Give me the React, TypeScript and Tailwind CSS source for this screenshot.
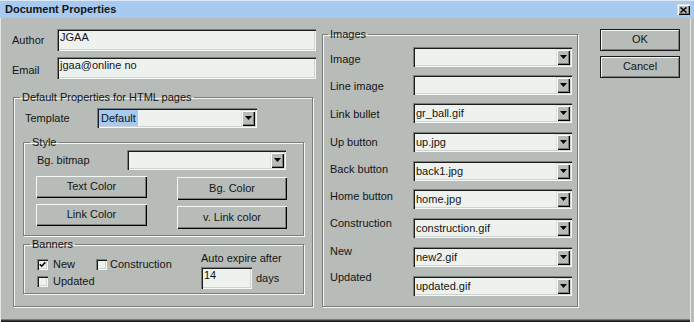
import React from "react";

const SUNKEN =
  "shadow-[inset_1px_1px_0_#7a7e7a,inset_2px_2px_0_#1c1c1c,inset_-1px_-1px_0_#f6faf6,inset_-2px_-2px_0_#cfd3cf]";
const RAISED =
  "shadow-[inset_1px_1px_0_#dcdedc,inset_2px_2px_0_#ffffff,inset_-1px_-1px_0_#000000,inset_-2px_-2px_0_#7a7e7a]";
const BTN =
  "shadow-[inset_1px_1px_0_#f4f8f4,inset_-1px_-1px_0_#000000,inset_-2px_-2px_0_#7a7e7a]";
const DEFBTN =
  "border border-[#1a1a1a] shadow-[inset_1px_1px_0_#f4f8f4,inset_-1px_-1px_0_#7a7e7a]";
const GROUP =
  "border border-[#7a7e7a] shadow-[inset_1px_1px_0_#f4f8f4,1px_1px_0_#f4f8f4]";

function Arrow() {
  return (
    <div className={`flex w-[14px] items-center justify-center bg-[#b8bcb8] ${RAISED}`}>
      <svg width="7" height="4" viewBox="0 0 7 4">
        <polygon points="0,0 7,0 3.5,4" fill="#000" />
      </svg>
    </div>
  );
}

function Combo({
  className = "",
  value = "",
  selected = false,
}: {
  className?: string;
  value?: string;
  selected?: boolean;
}) {
  return (
    <div className={`flex h-[20px] bg-[#eef2ee] p-[2px] ${SUNKEN} ${className}`}>
      <div className="flex-1 overflow-hidden whitespace-nowrap leading-[16px]">
        {selected ? (
          <span className="inline-block h-[16px] bg-[#a6caf0] pl-[2px] pr-[2px]">{value}</span>
        ) : (
          <span className="pl-[1px]">{value}</span>
        )}
      </div>
      <Arrow />
    </div>
  );
}

function TextBox({ className = "", value = "" }: { className?: string; value?: string }) {
  return (
    <div className={`bg-[#eef2ee] pl-[3px] pt-[2px] leading-[13px] ${SUNKEN} ${className}`}>
      {value}
    </div>
  );
}

function Button({ className = "", label }: { className?: string; label: string }) {
  return (
    <div className={`flex items-center justify-center pb-[1px] ${BTN} ${className}`}>{label}</div>
  );
}

function Check({ checked = false }: { checked?: boolean }) {
  return (
    <div className={`flex h-[11px] w-[11px] items-center justify-center bg-[#eef2ee] ${SUNKEN}`}>
      {checked && (
        <svg width="7" height="7" viewBox="0 0 7 7">
          <path d="M0.8 3.2 L2.7 5.2 L6.3 1.4" fill="none" stroke="#000" strokeWidth="1.6" />
        </svg>
      )}
    </div>
  );
}

const imageRows: { label: string; value: string; lmt: string; cmt: string }[] = [
  { label: "Image", value: "", lmt: "mt-[12px]", cmt: "mt-[6px]" },
  { label: "Line image", value: "", lmt: "mt-[14px]", cmt: "mt-[8px]" },
  { label: "Link bullet", value: "gr_ball.gif", lmt: "mt-[15px]", cmt: "mt-[8px]" },
  { label: "Up button", value: "up.jpg", lmt: "mt-[15px]", cmt: "mt-[9px]" },
  { label: "Back button", value: "back1.jpg", lmt: "mt-[14px]", cmt: "mt-[9px]" },
  { label: "Home button", value: "home.jpg", lmt: "mt-[14px]", cmt: "mt-[8px]" },
  { label: "Construction", value: "construction.gif", lmt: "mt-[14px]", cmt: "mt-[9px]" },
  { label: "New", value: "new2.gif", lmt: "mt-[15px]", cmt: "mt-[9px]" },
  { label: "Updated", value: "updated.gif", lmt: "mt-[13px]", cmt: "mt-[9px]" },
];

export default function App() {
  return (
    <div className="flex h-[322px] w-[694px] flex-col overflow-hidden bg-[#b8bcb8] font-['Liberation_Sans',Arial,sans-serif] text-[11px] leading-[13px] text-[#141414]">
      {/* Title bar */}
      <div className="flex h-[18px] shrink-0 items-center justify-between border-t border-t-[#dce8f4] bg-[#a6caf0] pl-[5px] pr-[4px]">
        <span className="font-bold">Document Properties</span>
        <div className={`flex h-[11px] w-[13px] items-center justify-center bg-[#b8bcb8] ${RAISED}`}>
          <svg width="7" height="6" viewBox="0 0 7 6">
            <path d="M0.5 0.5 L6.5 5.5 M6.5 0.5 L0.5 5.5" stroke="#000" strokeWidth="1.5" />
          </svg>
        </div>
      </div>

      {/* Body */}
      <div className="flex flex-1 pl-[12px] shadow-[inset_1px_0_0_#e4e8e4,inset_-3px_0_0_#b8bcb8,inset_-4px_0_0_#e4e8e4,inset_0_-1px_0_#1a1a1a,inset_0_-2px_0_#3a3a3a,inset_0_-3px_0_#7a7e7a]">
        {/* Left column */}
        <div className="flex w-[304px] flex-col">
          <div className="mt-[11px] flex h-[22px]">
            <span className="w-[45px] pt-[5px]">Author</span>
            <TextBox className="w-[259px]" value="JGAA" />
          </div>
          <div className="mt-[6px] flex h-[22px]">
            <span className="w-[45px] pt-[7px]">Email</span>
            <TextBox className="w-[259px]" value="jgaa@online no" />
          </div>

          <fieldset className={`ml-[1px] mt-[12px] h-[216px] w-[300px] ${GROUP}`}>
            <legend className="ml-[6px] px-[2px]">Default Properties for HTML pages</legend>
            <div className="mt-[4px] flex items-center pl-[11px]">
              <span className="w-[72px]">Template</span>
              <Combo className="w-[160px]" value="Default" selected />
            </div>

            <fieldset className={`ml-[9px] mt-[8px] h-[100px] w-[281px] ${GROUP}`}>
              <legend className="ml-[6px] px-[2px]">Style</legend>
              <div className="mt-[1px] flex items-center pl-[12px]">
                <span className="ml-[1px] w-[90px]">Bg. bitmap</span>
                <Combo className="w-[159px]" />
              </div>
              <div className="mt-[6px] flex gap-[30px] pl-[12px]">
                <div className="flex flex-col gap-[6px]">
                  <Button className="h-[22px] w-[111px]" label="Text Color" />
                  <Button className="h-[22px] w-[111px]" label="Link Color" />
                </div>
                <div className="mt-[1px] flex flex-col gap-[6px]">
                  <Button className="h-[23px] w-[110px]" label="Bg. Color" />
                  <Button className="h-[23px] w-[110px]" label="v. Link color" />
                </div>
              </div>
            </fieldset>

            <fieldset className={`ml-[9px] mt-[2px] h-[56px] w-[281px] ${GROUP}`}>
              <legend className="ml-[6px] px-[2px]">Banners</legend>
              <div className="flex pl-[13px]">
                <div className="flex w-[164px] flex-col pt-[7px]">
                  <div className="flex items-center">
                    <Check checked />
                    <span className="ml-[5px] w-[43px]">New</span>
                    <Check />
                    <span className="ml-[3px]">Construction</span>
                  </div>
                  <div className="mt-[4px] flex items-center">
                    <Check />
                    <span className="ml-[5px]">Updated</span>
                  </div>
                </div>
                <div className="flex flex-col pt-[1px]">
                  <span>Auto expire after</span>
                  <div className="mt-[2px] flex items-center">
                    <TextBox className="h-[22px] w-[51px]" value="14" />
                    <span className="ml-[4px]">days</span>
                  </div>
                </div>
              </div>
            </fieldset>
          </fieldset>
        </div>

        {/* Images group */}
        <fieldset className={`ml-[6px] mt-[10px] h-[279px] w-[256px] ${GROUP}`}>
          <legend className="ml-[5px] px-[2px]">Images</legend>
          <div className="flex pl-[7px]">
            <div className="flex w-[83px] flex-col">
              {imageRows.map((r) => (
                <span key={r.label} className={r.lmt}>
                  {r.label}
                </span>
              ))}
            </div>
            <div className="flex flex-col">
              {imageRows.map((r) => (
                <Combo key={r.label} className={`w-[159px] ${r.cmt}`} value={r.value} />
              ))}
            </div>
          </div>
        </fieldset>

        {/* Buttons */}
        <div className="ml-[22px] mt-[11px] flex flex-col">
          <Button className={`h-[22px] w-[80px] ${DEFBTN}`} label="OK" />
          <Button className={`mt-[5px] h-[22px] w-[80px] ${DEFBTN}`} label="Cancel" />
        </div>
      </div>
    </div>
  );
}
